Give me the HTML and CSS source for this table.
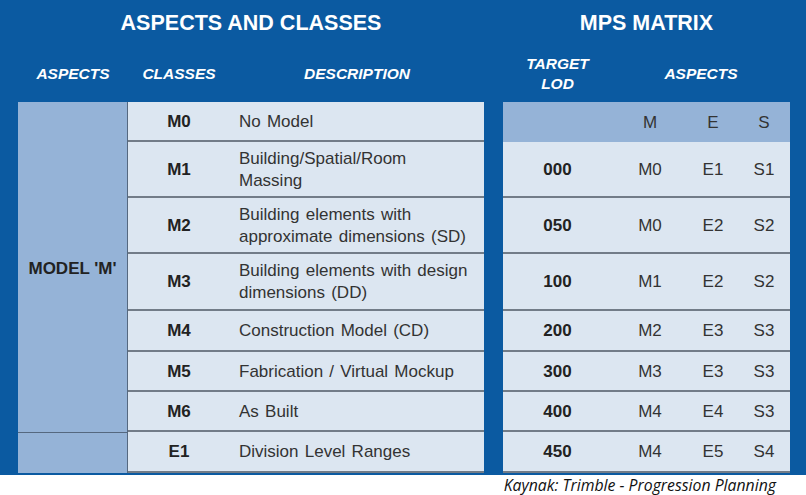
FILE: index.html
```html
<!DOCTYPE html>
<html>
<head>
<meta charset="utf-8">
<link rel="stylesheet" href="styles.css">
</head>
<body>
<div class="page">
  <div class="panel">
    <section class="left">
      <h1 class="title">ASPECTS AND CLASSES</h1>
      <div class="subhead lcols">
        <div>ASPECTS</div>
        <div>CLASSES</div>
        <div>DESCRIPTION</div>
      </div>
      <div class="ltable lcols">
        <div class="aspect a-model">MODEL 'M'</div>
        <div class="cell cls">M0</div><div class="cell desc">No Model</div>
        <div class="cell cls">M1</div><div class="cell desc">Building/Spatial/Room<br>Massing</div>
        <div class="cell cls">M2</div><div class="cell desc">Building elements with<br>approximate dimensions (SD)</div>
        <div class="cell cls">M3</div><div class="cell desc">Building elements with design<br>dimensions (DD)</div>
        <div class="cell cls">M4</div><div class="cell desc">Construction Model (CD)</div>
        <div class="cell cls">M5</div><div class="cell desc">Fabrication / Virtual Mockup</div>
        <div class="cell cls">M6</div><div class="cell desc">As Built</div>
        <div class="aspect a-e"></div>
        <div class="cell cls">E1</div><div class="cell desc">Division Level Ranges</div>
      </div>
    </section>
    <section class="right">
      <h1 class="title">MPS MATRIX</h1>
      <div class="subhead rsub">
        <div>TARGET<br>LOD</div>
        <div>ASPECTS</div>
      </div>
      <div class="rtable">
        <div class="hcell"></div><div class="hcell">M</div><div class="hcell">E</div><div class="hcell">S</div>
        <div class="cell lod">000</div><div class="cell">M0</div><div class="cell">E1</div><div class="cell">S1</div>
        <div class="cell lod">050</div><div class="cell">M0</div><div class="cell">E2</div><div class="cell">S2</div>
        <div class="cell lod">100</div><div class="cell">M1</div><div class="cell">E2</div><div class="cell">S2</div>
        <div class="cell lod">200</div><div class="cell">M2</div><div class="cell">E3</div><div class="cell">S3</div>
        <div class="cell lod">300</div><div class="cell">M3</div><div class="cell">E3</div><div class="cell">S3</div>
        <div class="cell lod">400</div><div class="cell">M4</div><div class="cell">E4</div><div class="cell">S3</div>
        <div class="cell lod">450</div><div class="cell">M4</div><div class="cell">E5</div><div class="cell">S4</div>
      </div>
    </section>
  </div>
  <p class="caption">Kaynak: Trimble - Progression Planning</p>
</div>
</body>
</html>
```
FILE: styles.css
```css
* { box-sizing: border-box; }
html, body { margin: 0; padding: 0; background: #ffffff; }
body { font-family: "Liberation Sans", Arial, sans-serif; }

.page { width: 806px; }

.panel {
  height: 475px;
  background: #0b5aa1;
  display: flex;
  gap: 19px;
  padding-left: 18px;
  overflow: hidden;
}

.left { width: 466px; }
.right { width: 287px; }

.title {
  margin: 0;
  height: 45px;
  display: flex;
  align-items: center;
  justify-content: center;
  color: #ffffff;
  font-size: 21.5px;
  font-weight: bold;
  padding-top: 1px;
}

.subhead {
  height: 57px;
  color: #ffffff;
  font-size: 15.5px;
  font-weight: bold;
  font-style: italic;
  line-height: 20px;
}
.subhead > div {
  display: flex;
  align-items: center;
  justify-content: center;
  text-align: center;
}

.lcols {
  display: grid;
  grid-template-columns: 110px 102px 254px;
}

.rsub {
  display: grid;
  grid-template-columns: 109px 178px;
}

.ltable, .rtable {
  display: grid;
  grid-template-rows: 40px 56px 56px 57px 41px 40px 40px 41px;
}
.rtable { grid-template-columns: 109px 76px 50px 52px; }

.aspect {
  background: #95b3d7;
  border-right: 1px solid #55687f;
  display: flex;
  align-items: center;
  justify-content: center;
  font-size: 17px;
  font-weight: bold;
  color: #222;
  grid-column: 1;
}
.a-model { grid-row: 1 / 8; padding-top: 4px; }
.a-e { grid-row: 8; border-top: 1px solid #55687f; }

.cell {
  background: #dce6f1;
  border-bottom: 2px solid #727c88;
  display: flex;
  align-items: center;
  justify-content: center;
  font-size: 17px;
  color: #333;
  line-height: 22px;
  padding-top: 1px;
}
.cls { font-weight: bold; color: #222; }
.desc {
  justify-content: flex-start;
  padding-left: 9px;
  word-spacing: 1.5px;
  white-space: nowrap;
}
.lod { font-weight: bold; color: #222; }

.hcell {
  background: #95b3d7;
  display: flex;
  align-items: center;
  justify-content: center;
  font-size: 17px;
  color: #333;
  padding-top: 1px;
}

.caption {
  margin: 0;
  height: 20px;
  text-align: right;
  padding-right: 30px;
  font-family: "Open Sans", "Noto Sans", sans-serif;
  font-style: italic;
  font-size: 15.8px;
  line-height: 20px;
  color: #111;
}
```
